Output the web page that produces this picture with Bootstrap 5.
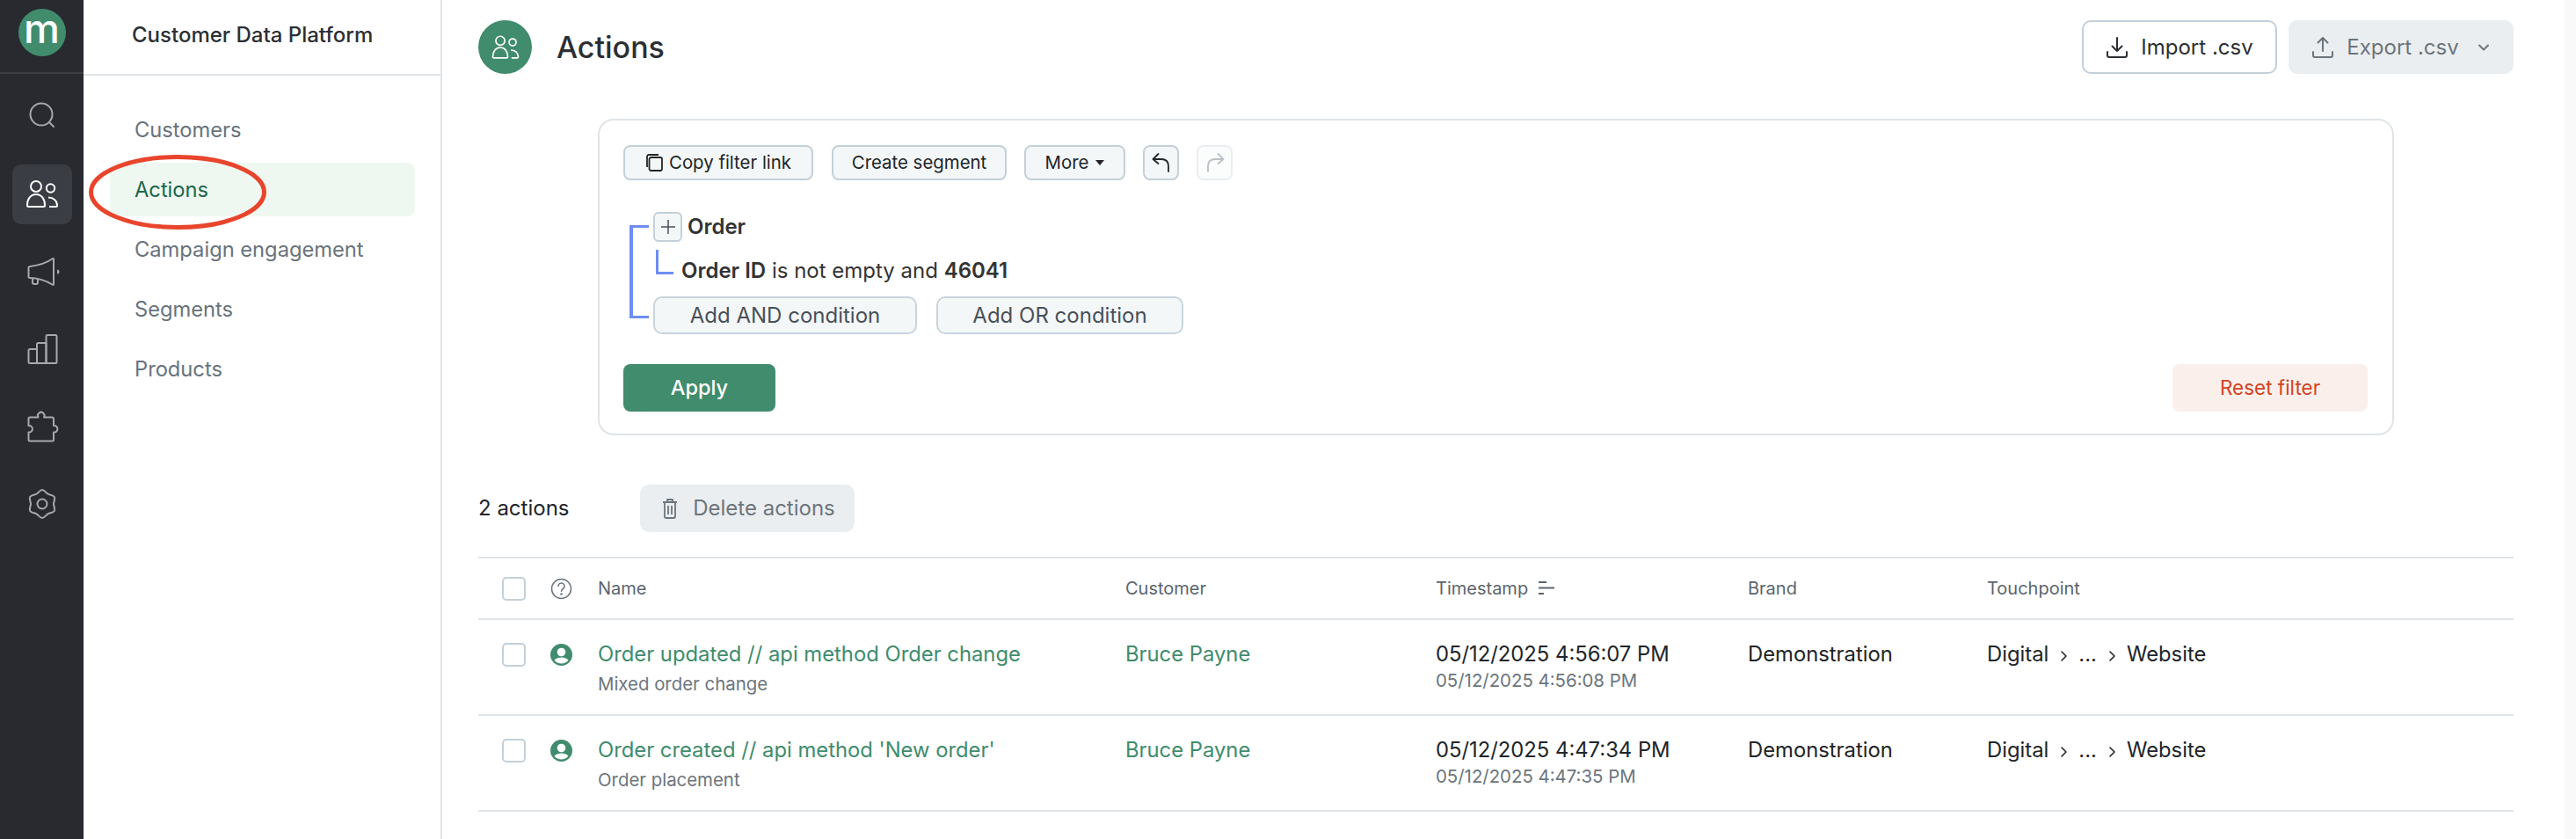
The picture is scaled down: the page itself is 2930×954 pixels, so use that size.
<!DOCTYPE html>
<html lang="en">
<head>
<meta charset="utf-8">
<title>Actions</title>
<link href="https://cdn.jsdelivr.net/npm/bootstrap@5.3.0/dist/css/bootstrap.min.css" rel="stylesheet">
<style>
html,body{height:100%;}
body{font-family:Inter,"Liberation Sans",sans-serif;color:#212529;background:#fff;overflow:hidden;}
.shell{height:954px;width:2930px;}
.rail{width:95px;background:#282a30;flex:none;}
.rail-top{height:84px;border-bottom:2px solid #3a3d43;padding-top:10px;}
.logo{width:54px;height:54px;border-radius:50%;background:#408c6d;color:#fff;font-size:46px;font-weight:500;line-height:44px;}
.rail-list{padding-top:15px;gap:20px;}
.rail-item{width:68px;height:68px;border-radius:10px;color:#a6a8ab;}
.rail-item svg{width:40px;height:40px;}
.rail-item.on{background:#3a3d43;color:#fff;}
.panel{width:408px;flex:none;border-right:2px solid #dfe4e8;position:relative;}
.panel-head{height:86px;border-bottom:2px solid #dfe4e8;padding:0 0 4px 55px;font-size:24px;font-weight:500;color:#2c2f33;white-space:nowrap;}
.panel-nav{padding:31px 29px 0 30px;gap:7px;}
.panel-link{height:61px;line-height:61px;padding-left:28px;border-radius:8px;font-size:23.7px;color:#68737c;text-decoration:none;}
.panel-link.on{background:#eef8f1;color:#1e6648;}
.ring{position:absolute;left:6px;top:176px;width:202px;height:85px;}
.work{flex:1 1 auto;padding:23px 58px 0 41px;min-width:0;}
.edge{width:13px;flex:none;background:#f9f9f9;}
.title-dot{width:61px;height:61px;border-radius:50%;background:#408c6d;color:#fff;}
.title-dot svg{width:34px;height:34px;}
.page-title{font-size:34px;font-weight:500;color:#2c2f33;margin:0 0 0 28px;line-height:61px;}
.big-btn{height:61px;border-radius:10px;font-size:24px;font-weight:400;padding:0;display:inline-flex;align-items:center;justify-content:center;gap:14px;}
.big-btn svg{width:26px;height:26px;}
.b-import{width:222px;background:#fff;border:2px solid #c4d0d8;color:#2c2f33;}
.b-export{width:256px;background:#ebeef0;border:0;color:#6c757d;margin-left:13px;}
.b-export .chev{width:16px;height:16px;margin-left:6px;}
.filter{margin:51px 136px 0 136px;height:360px;border:2px solid #dfe4e8;border-radius:18px;padding:28px 28px 0 27px;}
.tool{height:40px;border:2px solid #c4d0d8;background:#f4f7f8;border-radius:8px;font-size:20.4px;color:#212529;padding:0;display:inline-flex;align-items:center;justify-content:center;gap:7px;}
.t-copy{width:216px;}.t-seg{width:199px;margin-left:21px;}.t-more{width:115px;margin-left:20px;}
.t-undo{width:41px;margin-left:20px;}.t-redo{width:41px;margin-left:20px;border-color:#e9eef1;background:#fbfcfc;color:#b9c0c6;}
.t-undo svg,.t-redo svg{width:26px;height:26px;}
.tcaret{width:0;height:0;border-left:5.5px solid transparent;border-right:5.5px solid transparent;border-top:6.5px solid #212529;margin-left:1px;}
.tree{position:relative;margin-top:36px;padding-left:34px;height:140px;}
.bracket{position:absolute;left:7px;top:15px;width:22px;height:106px;border:solid #6f8df2;border-width:3px 0 3px 4px;}
.branch{position:absolute;left:37px;top:43px;width:20px;height:28px;border:solid #6f8df2;border-width:0 0 3px 3px;}
.plus{width:33px;height:34px;border:2px solid #c4d0d8;background:#f4f7f8;border-radius:6px;color:#495057;padding:0;display:inline-flex;align-items:center;justify-content:center;}
.plus svg{width:20px;height:20px;}
.node{font-size:24px;color:#333;line-height:34px;}
.node b{font-weight:600;}
.row-one{height:34px;gap:6px;}
.row-two{margin:16px 0 0 32px;height:34px;}
.add{height:43px;border:2px solid #c9d4dc;background:#f4f7f8;border-radius:10px;font-size:24px;color:#495057;padding:0;}
.a-and{width:300px;}.a-or{width:281px;margin-left:22px;}
.row-three{margin-top:12px;}
.foot{margin-top:33px;}
.b-apply{width:173px;height:54px;background:#408c6d;border:0;border-radius:8px;color:#fff;font-size:23.5px;font-weight:500;padding:0;}
.b-reset{width:222px;height:54px;background:#fbefec;border:0;border-radius:8px;color:#d1431f;font-size:22.5px;padding:0;}
.count-row{margin-top:56px;height:54px;}
.count{width:184px;font-size:24px;color:#212529;}
.b-del{width:244px;height:54px;background:#ebeef0;border:0;border-radius:10px;color:#6c757d;font-size:24px;padding:0;display:inline-flex;align-items:center;justify-content:center;gap:14px;}
.b-del svg{width:24px;height:24px;}
.grid-wrap{margin-top:28px;}
.grid-t{table-layout:fixed;width:100%;margin:0;border-top:2px solid #dfe4e8;--bs-table-border-color:#dfe4e8;}
.grid-t th,.grid-t td{padding:0;border-bottom:2px solid #dfe4e8;vertical-align:top;}
.grid-t thead th{height:70px;vertical-align:middle;font-size:20px;font-weight:400;color:#5b656e;}
.grid-t tbody tr{height:109px;}
.grid-t tbody td{padding-top:23px;font-size:23.8px;line-height:31px;color:#212529;}
.cbox{display:block;width:27px;height:27px;border:2px solid #c4d0d8;border-radius:5px;margin:3px 0 0 27px;background:#fff;}
thead .cbox{margin-top:0;}
.pico{display:block;width:25px;height:25px;color:#408c6d;margin-top:4px;}
.qico{display:block;width:25px;height:25px;color:#6c757d;}
.lnk{color:#408c6d;text-decoration:none;}
.sub{display:block;font-size:20.4px;line-height:26px;color:#6c757d;margin-top:6px;}
.subd{display:block;font-size:20.4px;line-height:26px;color:#6c757d;margin-top:2px;}
.sort{width:22px;height:22px;vertical-align:-4px;margin-left:10px;color:#5b656e;}
.sep{width:14px;height:16px;margin:0 10px;color:#212529;}
</style>
</head>
<body>
<div class="shell d-flex">
  <aside class="rail d-flex flex-column">
    <div class="rail-top d-flex justify-content-center"><div class="logo d-flex justify-content-center">m</div></div>
    <div class="rail-list d-flex flex-column align-items-center">
      <div class="rail-item d-flex align-items-center justify-content-center"><svg viewBox="0 0 40 40" fill="none" stroke="currentColor" stroke-width="2" stroke-linecap="round"><circle cx="19" cy="17" r="12.5"/><path d="M28 26l5 5"/></svg></div>
      <div class="rail-item on d-flex align-items-center justify-content-center"><svg viewBox="0 0 40 40" fill="none" stroke="currentColor" stroke-width="2"><circle cx="13" cy="11" r="6"/><path d="M4.5 34c-1 0-1.500-.5-1.500-1.500C3 25 7 20 13 20s10 5 10 12.500c0 1-.5 1.500-1.500 1.500z"/><circle cx="29.500" cy="13" r="4.700"/><path d="M27 23.500c6 0 10 4 10 9 0 1-.5 1.500-1.500 1.500H28"/></svg></div>
      <div class="rail-item d-flex align-items-center justify-content-center"><svg viewBox="0 0 40 40" fill="none" stroke="currentColor" stroke-width="2" stroke-linejoin="round"><path d="M6 14C14 13 25 10 32 5c.7-.4 1 0 1 1v28c0 1-.5 1.300-1.200.8C25 30 14 27 6 27c-1 0-1.500-.5-1.500-1.500v-10C4.500 14.500 5 14 6 14z"/><path d="M9 27v5a2 2 0 0 0 2 2h2a2 2 0 0 0 2-2v-4"/><path d="M37 17.500a2.500 2.500 0 0 1 0 5z" fill="currentColor" stroke="none"/></svg></div>
      <div class="rail-item d-flex align-items-center justify-content-center"><svg viewBox="0 0 40 40" fill="none" stroke="currentColor" stroke-width="2" stroke-linejoin="round"><path d="M14 36H6a1.500 1.500 0 0 1-1.500-1.500v-13A1.500 1.500 0 0 1 6 20h8z"/><path d="M14 36V14.500A1.500 1.500 0 0 1 15.500 13h9v23z"/><path d="M24.500 36V5.500A1.500 1.500 0 0 1 26 4h9a1.500 1.500 0 0 1 1.500 1.500v29A1.500 1.500 0 0 1 35 36z"/></svg></div>
      <div class="rail-item d-flex align-items-center justify-content-center"><svg viewBox="0 0 40 40" fill="none" stroke="currentColor" stroke-width="2" stroke-linejoin="round"><path d="M6 9.500h9.500a3.800 3.800 0 1 1 6.500 0H31a2 2 0 0 1 2 2v7.500a3.800 3.800 0 1 1 0 7.500V35a1.500 1.500 0 0 1-1.500 1.500H6A1.500 1.500 0 0 1 4.500 35v-8.500a3.800 3.800 0 1 0 0-7.500v-8A1.500 1.500 0 0 1 6 9.500z"/></svg></div>
      <div class="rail-item d-flex align-items-center justify-content-center"><svg viewBox="0 0 40 40" fill="none" stroke="currentColor" stroke-width="2" stroke-linejoin="round"><path d="M20 4C22.500 4 24.330 7.490 26.500 8.740C28.670 9.990 32.610 9.830 33.860 12C35.110 14.170 33 17.500 33 20C33 22.500 35.110 25.830 33.860 28C32.610 30.170 28.670 30.010 26.500 31.260C24.330 32.510 22.500 36 20 36C17.500 36 15.670 32.510 13.500 31.260C11.330 30.010 7.390 30.170 6.140 28C4.890 25.830 7 22.500 7 20C7 17.500 4.890 14.170 6.140 12C7.390 9.830 11.330 9.990 13.500 8.740C15.670 7.490 17.500 4 20 4z"/><circle cx="20" cy="20" r="5.500"/></svg></div>
    </div>
  </aside>

  <nav class="panel d-flex flex-column">
    <div class="panel-head d-flex align-items-center">Customer Data Platform</div>
    <div class="panel-nav d-flex flex-column">
      <a class="panel-link" href="#">Customers</a>
      <a class="panel-link on" href="#">Actions</a>
      <a class="panel-link" href="#">Campaign engagement</a>
      <a class="panel-link" href="#">Segments</a>
      <a class="panel-link" href="#">Products</a>
    </div>
    <svg class="ring" viewBox="0 0 202 85" fill="none"><ellipse cx="101" cy="42.500" rx="98.500" ry="40" stroke="#e8452c" stroke-width="5"/></svg>
  </nav>

  <main class="work">
    <div class="d-flex align-items-center">
      <div class="title-dot d-flex align-items-center justify-content-center"><svg viewBox="0 0 40 40" fill="none" stroke="currentColor" stroke-width="2"><circle cx="13" cy="11" r="6"/><path d="M4.500 34c-1 0-1.500-.5-1.500-1.500C3 25 7 20 13 20s10 5 10 12.500c0 1-.5 1.500-1.500 1.500z"/><circle cx="29.500" cy="13" r="4.700"/><path d="M27 23.500c6 0 10 4 10 9 0 1-.5 1.500-1.500 1.500H28"/></svg></div>
      <h1 class="page-title">Actions</h1>
      <div class="ms-auto d-flex">
        <button class="btn big-btn b-import" type="button"><svg viewBox="0 0 26 26" fill="none" stroke="currentColor" stroke-width="2" stroke-linecap="round" stroke-linejoin="round"><path d="M13 2v15M7.500 11.500L13 17l5.500-5.500M2 18v4a2 2 0 0 0 2 2h18a2 2 0 0 0 2-2v-4"/></svg>Import .csv</button>
        <button class="btn big-btn b-export" type="button"><svg viewBox="0 0 26 26" fill="none" stroke="currentColor" stroke-width="2" stroke-linecap="round" stroke-linejoin="round"><path d="M13 17V2M7.500 7.500L13 2l5.500 5.500M2 18v4a2 2 0 0 0 2 2h18a2 2 0 0 0 2-2v-4"/></svg>Export .csv<svg class="chev" viewBox="0 0 16 16" fill="none" stroke="currentColor" stroke-width="2" stroke-linecap="round" stroke-linejoin="round"><path d="M3 5.500l5 5 5-5"/></svg></button>
      </div>
    </div>

    <section class="filter">
      <div class="d-flex">
        <button class="btn tool t-copy" type="button"><svg width="20" height="20" viewBox="0 0 20 20" fill="none" stroke="currentColor" stroke-width="1.800" stroke-linejoin="round"><rect x="4.500" y="4" width="14.500" height="15" rx="2"/><path d="M2 15V3a2 2 0 0 1 2-2h11"/></svg>Copy filter link</button>
        <button class="btn tool t-seg" type="button">Create segment</button>
        <button class="btn tool t-more" type="button">More<span class="tcaret"></span></button>
        <button class="btn tool t-undo" type="button"><svg viewBox="0 0 26 26" fill="none" stroke="currentColor" stroke-width="1.800" stroke-linecap="round" stroke-linejoin="round"><path d="M9.500 3L3.500 9l6 5M3.500 9H13c5 0 8 3 8 8v6"/></svg></button>
        <button class="btn tool t-redo" type="button"><svg viewBox="0 0 26 26" fill="none" stroke="currentColor" stroke-width="1.800" stroke-linecap="round" stroke-linejoin="round"><path d="M16.500 3l6 6-6 5M22.500 9H13c-5 0-8 3-8 8v6"/></svg></button>
      </div>
      <div class="tree">
        <span class="bracket"></span><span class="branch"></span>
        <div class="row-one d-flex align-items-center">
          <button class="btn plus" type="button"><svg viewBox="0 0 20 20" fill="none" stroke="currentColor" stroke-width="1.500"><path d="M10 2v16M2 10h16"/></svg></button>
          <span class="node"><b>Order</b></span>
        </div>
        <div class="row-two node"><b>Order ID</b> is not empty and <b>46041</b></div>
        <div class="row-three d-flex">
          <button class="btn add a-and" type="button">Add AND condition</button>
          <button class="btn add a-or" type="button">Add OR condition</button>
        </div>
      </div>
      <div class="foot d-flex justify-content-between">
        <button class="btn b-apply" type="button">Apply</button>
        <button class="btn b-reset" type="button">Reset filter</button>
      </div>
    </section>

    <div class="count-row d-flex align-items-center">
      <span class="count">2 actions</span>
      <button class="btn b-del" type="button"><svg viewBox="0 0 24 24" fill="none" stroke="currentColor" stroke-width="1.800" stroke-linejoin="round"><path d="M4 5h16M9 5V2h6v3M6 5v16a2 2 0 0 0 2 2h8a2 2 0 0 0 2-2V5M10 9v10M14 9v10"/></svg>Delete actions</button>
    </div>

    <div class="grid-wrap">
      <table class="table grid-t">
        <colgroup><col style="width:82px"><col style="width:54px"><col style="width:600px"><col style="width:353px"><col style="width:355px"><col style="width:272px"><col></colgroup>
        <thead>
          <tr>
            <th><span class="cbox"></span></th>
            <th><svg class="qico" viewBox="0 0 25 25" fill="none" stroke="currentColor" stroke-width="1.500" stroke-linecap="round"><circle cx="12.500" cy="12.500" r="11"/><path d="M9 9.500a3.500 3.500 0 1 1 5.300 3c-1.300.8-1.800 1.500-1.800 2.800"/><circle cx="12.500" cy="18.500" r=".6"/></svg></th>
            <th>Name</th>
            <th>Customer</th>
            <th>Timestamp<svg class="sort" viewBox="0 0 22 22" fill="none" stroke="currentColor" stroke-width="1.800"><path d="M2 4h9M2 10.500h18M2 17h6"/></svg></th>
            <th>Brand</th>
            <th>Touchpoint</th>
          </tr>
        </thead>
        <tbody>
          <tr>
            <td><span class="cbox"></span></td>
            <td><svg class="pico" viewBox="0 0 25 25"><circle cx="12.500" cy="12.500" r="12.500" fill="currentColor"/><circle cx="12.500" cy="9.500" r="4.800" fill="#fff"/><path d="M4.500 18.500c2-2 5-3 8-3s6 1 8 3a10 10 0 0 1-16 0z" fill="#fff"/></svg></td>
            <td><a class="lnk" href="#">Order updated // api method Order change</a><span class="sub">Mixed order change</span></td>
            <td><a class="lnk" href="#">Bruce Payne</a></td>
            <td>05/12/2025 4:56:07 PM<span class="subd">05/12/2025 4:56:08 PM</span></td>
            <td>Demonstration</td>
            <td>Digital<svg class="sep" viewBox="0 0 14 16" fill="none" stroke="currentColor" stroke-width="1.600" stroke-linecap="round" stroke-linejoin="round"><path d="M5 3l5 5-5 5"/></svg>...<svg class="sep" viewBox="0 0 14 16" fill="none" stroke="currentColor" stroke-width="1.600" stroke-linecap="round" stroke-linejoin="round"><path d="M5 3l5 5-5 5"/></svg>Website</td>
          </tr>
          <tr>
            <td><span class="cbox"></span></td>
            <td><svg class="pico" viewBox="0 0 25 25"><circle cx="12.500" cy="12.500" r="12.500" fill="currentColor"/><circle cx="12.500" cy="9.500" r="4.800" fill="#fff"/><path d="M4.500 18.500c2-2 5-3 8-3s6 1 8 3a10 10 0 0 1-16 0z" fill="#fff"/></svg></td>
            <td><a class="lnk" href="#">Order created // api method 'New order'</a><span class="sub">Order placement</span></td>
            <td><a class="lnk" href="#">Bruce Payne</a></td>
            <td>05/12/2025 4:47:34 PM<span class="subd">05/12/2025 4:47:35 PM</span></td>
            <td>Demonstration</td>
            <td>Digital<svg class="sep" viewBox="0 0 14 16" fill="none" stroke="currentColor" stroke-width="1.600" stroke-linecap="round" stroke-linejoin="round"><path d="M5 3l5 5-5 5"/></svg>...<svg class="sep" viewBox="0 0 14 16" fill="none" stroke="currentColor" stroke-width="1.600" stroke-linecap="round" stroke-linejoin="round"><path d="M5 3l5 5-5 5"/></svg>Website</td>
          </tr>
        </tbody>
      </table>
    </div>
  </main>
  <div class="edge"></div>
</div>
<script src="https://cdn.jsdelivr.net/npm/bootstrap@5.3.0/dist/js/bootstrap.bundle.min.js"></script>
</body>
</html>
